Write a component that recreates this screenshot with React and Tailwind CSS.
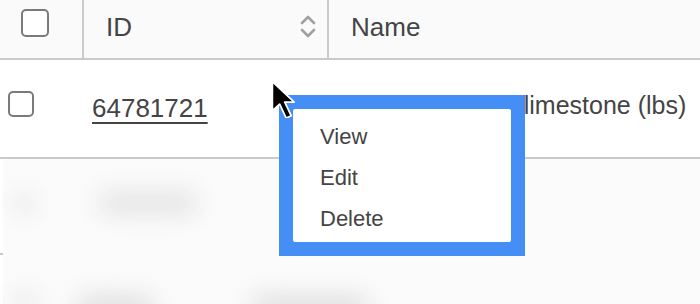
export default function App() {
  return (
    <div
      className="relative w-[700px] h-[304px] overflow-hidden bg-white text-[#444]"
      style={{ fontFamily: '"Liberation Sans", Arial, sans-serif' }}
    >
      {/* Header */}
      <div className="flex h-[60px] bg-[#fafafa] border-b-2 border-[#cacaca]">
        <div className="w-[84px] flex pt-[9px] pl-[21px] border-r-2 border-[#cacaca]">
          <div className="w-[28px] h-[28px] rounded-[5px] border-2 border-[#7a7a7a] bg-white" />
        </div>
        <div className="w-[245px] flex items-start justify-between pl-[22px] pr-[10px] border-r-2 border-[#cacaca]">
          <span className="text-[26px] leading-[26px] mt-[14px]">ID</span>
          <svg width="18" height="26" viewBox="0 0 18 26" className="mt-[13px]" fill="none" stroke="#a0a0a0" strokeWidth="2.6" strokeLinecap="round" strokeLinejoin="round">
            <path d="M3 10 L9 4 L15 10" />
            <path d="M3 17 L9 23 L15 17" />
          </svg>
        </div>
        <div className="flex-1 flex items-start pl-[22px]">
          <span className="text-[26px] leading-[26px] mt-[14px]">Name</span>
        </div>
      </div>

      {/* Row 1 */}
      <div className="flex items-center h-[99px] border-b-2 border-[#cacaca] bg-white">
        <div className="w-[84px] pl-[8px] -mt-[9px]">
          <div className="w-[26px] h-[26px] rounded-[5px] border-2 border-[#7a7a7a]" />
        </div>
        <div className="w-[245px] pl-[8px] pt-[2px]">
          <span className="text-[26px] leading-[26px] underline underline-offset-[5px] decoration-[1.5px]">64781721</span>
        </div>
        <div className="flex-1 pl-[28px] -mt-[5px] whitespace-nowrap">
          <span className="text-[25px] leading-[26px] text-transparent">Crushed white </span>
          <span className="text-[25px] leading-[26px]">limestone (lbs)</span>
        </div>
      </div>

      {/* Blurred rows */}
      <div className="relative h-[145px] bg-white">
        <div className="absolute left-0 top-[94px] w-[4px] h-[2px] bg-[#cacaca]" />
        <div className="absolute left-[3px] top-0 right-0 bottom-0 bg-[#fbfbfb]" />
        <div className="absolute left-[10px] top-[30px] w-[28px] h-[28px] rounded-full bg-[#f0f0f0] blur-[10px]" />
        <div className="absolute left-[98px] top-[33px] w-[100px] h-[22px] rounded-full bg-[#e2e2e2] blur-[12px]" />
        <div className="absolute left-[10px] top-[128px] w-[30px] h-[28px] rounded-full bg-[#f0f0f0] blur-[10px]" />
        <div className="absolute left-[75px] top-[136px] w-[80px] h-[28px] rounded-full bg-[#e0e0e0] blur-[12px]" />
        <div className="absolute left-[250px] top-[136px] w-[120px] h-[28px] rounded-full bg-[#e0e0e0] blur-[12px]" />
      </div>

      {/* Context menu */}
      <div className="absolute left-[279px] top-[95px] w-[246px] h-[161px] bg-[#448ef6] p-[14px]">
        <div className="w-full h-full bg-white rounded-[2px] flex flex-col pl-[27px] pt-[7px]">
          <span className="text-[22px] leading-[41px]">View</span>
          <span className="text-[22px] leading-[41px]">Edit</span>
          <span className="text-[22px] leading-[41px]">Delete</span>
        </div>
      </div>

      {/* Cursor */}
      <svg className="absolute left-[270px] top-[80px]" width="26" height="38" viewBox="-1.5 -1.5 22 34">
        <path
          d="M0 0 L0 20 L5 15.5 L9.5 25 L13 23.5 L8.5 14 L15 14 Z"
          transform="scale(1.3)"
          fill="#000"
          stroke="#fff"
          strokeWidth="1.2"
          strokeLinejoin="round"
        />
      </svg>
    </div>
  );
}
